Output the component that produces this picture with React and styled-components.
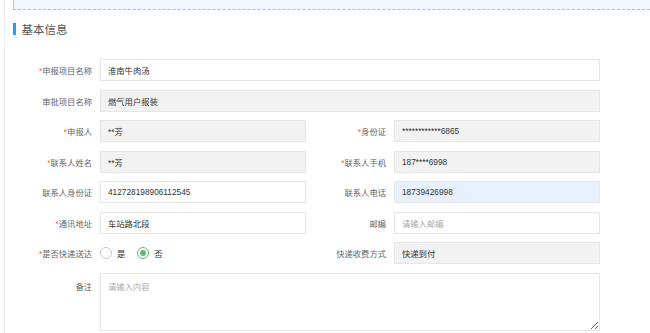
import styled, { createGlobalStyle } from "styled-components";

const GlobalStyle = createGlobalStyle`
  html, body {
    margin: 0;
    padding: 0;
    background: #ffffff;
    font-family: "Liberation Sans", "Noto Sans CJK SC", sans-serif;
  }
  * { box-sizing: border-box; }
`;

const Frame = styled.div`
  margin-left: 4px;
  width: 646px;
  height: 333px;
  overflow: hidden;
  border-left: 1px solid #ececec;
`;

const TopStrip = styled.div`
  margin-left: 8px;
  height: 10px;
  background: #f2f7ff;
  border-left: 1px dashed #a9bfdc;
  border-bottom: 1px dashed #a9bfdc;
`;

const Title = styled.div`
  display: flex;
  align-items: center;
  gap: 6px;
  margin: 13px 0 0 8px;
  height: 12px;
  font-size: 11.5px;
  color: #555;
  font-family: "Noto Sans CJK SC", sans-serif;

  &::before {
    content: "";
    display: block;
    width: 2.5px;
    height: 12px;
    background: #1e9fff;
  }
`;

const Form = styled.div`
  display: flex;
  flex-direction: column;
  gap: 8.5px;
  padding: 24px 0 0 7px;
`;

const Row = styled.div`
  display: flex;
`;

const Field = styled.div`
  display: flex;
  align-items: ${(p) => (p.$top ? "flex-start" : "center")};
  gap: 8px;
  width: ${(p) => (p.$half ? "294px" : "588px")};
`;

const Label = styled.div`
  width: 80px;
  flex: none;
  text-align: right;
  font-size: 8.3px;
  color: #666;
  font-family: "Noto Sans CJK SC", sans-serif;
  padding-top: ${(p) => (p.$top ? "7px" : "0")};
`;

const Star = styled.span`
  color: #ff5a3c;
  font-family: "Liberation Sans", sans-serif;
`;

const Input = styled.div`
  flex: 1;
  height: 22px;
  display: flex;
  align-items: center;
  padding-left: 7px;
  font-size: 8.3px;
  color: ${(p) => (p.$placeholder ? "#aaa" : "#333")};
  border: 1px solid #e6e6e6;
  background: ${(p) =>
    p.$disabled ? "#f2f2f2" : p.$filled ? "#e8f0fe" : "#fff"};
  font-family: "Liberation Sans", "Noto Sans CJK SC", sans-serif;
`;

const TextArea = styled.textarea`
  flex: 1;
  height: 58px;
  padding: 6px 7px;
  font-size: 8.3px;
  border: 1px solid #e6e6e6;
  color: #333;
  resize: vertical;
  outline: none;
  font-family: "Noto Sans CJK SC", sans-serif;

  &::placeholder {
    color: #aaa;
  }
`;

const Radios = styled.div`
  display: flex;
  align-items: center;
  height: 22px;
  gap: 12px;
`;

const RadioItem = styled.div`
  display: flex;
  align-items: center;
  gap: 5px;
  font-size: 8.3px;
  color: #333;
  font-family: "Noto Sans CJK SC", sans-serif;
`;

const Dot = styled.span`
  width: 12px;
  height: 12px;
  border-radius: 50%;
  border: 1px solid ${(p) => (p.$on ? "#5fb878" : "#c9c9c9")};
  display: flex;
  align-items: center;
  justify-content: center;

  &::after {
    content: "";
    display: ${(p) => (p.$on ? "block" : "none")};
    width: 6px;
    height: 6px;
    border-radius: 50%;
    background: #5fb878;
  }
`;

function Lbl({ req, children, top }) {
  return (
    <Label $top={top}>
      {req && <Star>*</Star>}
      {children}
    </Label>
  );
}

export default function App() {
  return (
    <>
      <GlobalStyle />
      <Frame>
        <TopStrip />
        <Title>基本信息</Title>
        <Form>
          <Row>
            <Field>
              <Lbl req>申报项目名称</Lbl>
              <Input>淮南牛肉汤</Input>
            </Field>
          </Row>
          <Row>
            <Field>
              <Lbl>审批项目名称</Lbl>
              <Input $disabled>燃气用户报装</Input>
            </Field>
          </Row>
          <Row>
            <Field $half>
              <Lbl req>申报人</Lbl>
              <Input $disabled>**芳</Input>
            </Field>
            <Field $half>
              <Lbl req>身份证</Lbl>
              <Input $disabled>************6865</Input>
            </Field>
          </Row>
          <Row>
            <Field $half>
              <Lbl req>联系人姓名</Lbl>
              <Input $disabled>**芳</Input>
            </Field>
            <Field $half>
              <Lbl req>联系人手机</Lbl>
              <Input $disabled>187****6998</Input>
            </Field>
          </Row>
          <Row>
            <Field $half>
              <Lbl>联系人身份证</Lbl>
              <Input>412728198906112545</Input>
            </Field>
            <Field $half>
              <Lbl>联系人电话</Lbl>
              <Input $filled>18739426998</Input>
            </Field>
          </Row>
          <Row>
            <Field $half>
              <Lbl req>通讯地址</Lbl>
              <Input>车站路北段</Input>
            </Field>
            <Field $half>
              <Lbl>邮编</Lbl>
              <Input $placeholder>请输入邮编</Input>
            </Field>
          </Row>
          <Row>
            <Field $half>
              <Lbl req>是否快递送达</Lbl>
              <Radios>
                <RadioItem>
                  <Dot />是
                </RadioItem>
                <RadioItem>
                  <Dot $on />否
                </RadioItem>
              </Radios>
            </Field>
            <Field $half>
              <Lbl>快递收费方式</Lbl>
              <Input $disabled>快递到付</Input>
            </Field>
          </Row>
          <Row>
            <Field $top>
              <Lbl top>备注</Lbl>
              <TextArea placeholder="请输入内容" />
            </Field>
          </Row>
        </Form>
      </Frame>
    </>
  );
}
